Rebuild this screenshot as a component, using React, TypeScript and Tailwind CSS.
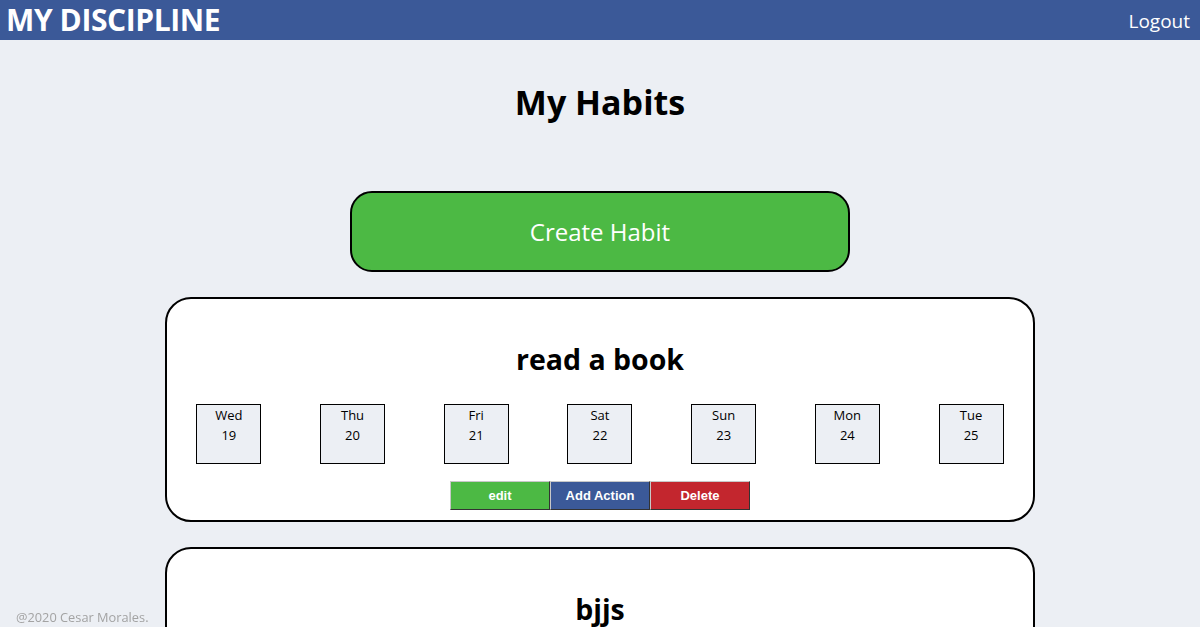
import React from "react";

const days = [
  { name: "Wed", num: 19 },
  { name: "Thu", num: 20 },
  { name: "Fri", num: 21 },
  { name: "Sat", num: 22 },
  { name: "Sun", num: 23 },
  { name: "Mon", num: 24 },
  { name: "Tue", num: 25 },
];

const habits = ["read a book", "bjjs"];

function HabitCard({ title }: { title: string }) {
  return (
    <div className="w-[870px] bg-white border-2 border-black rounded-[26px] pt-[42px] pb-[10px]">
      <h2 className="text-center text-[28.5px] leading-[36px] font-bold text-black">{title}</h2>
      <div className="flex justify-around mt-[27px]">
        {days.map((d) => (
          <div
            key={d.name}
            className="w-[65px] h-[60px] border border-black bg-[#eceff4] flex flex-col items-center text-[13px] leading-[20px] text-black"
          >
            <span>{d.name}</span>
            <span>{d.num}</span>
          </div>
        ))}
      </div>
      <div className="flex justify-center mt-[17px] font-['Liberation_Sans',Arial,sans-serif] text-[13px] font-bold text-white">
        <button className="w-[100px] h-[29px] bg-[#4cb944] border border-t-[#c8c8c8] border-l-[#c8c8c8] border-b-[#333] border-r-[#333]">
          edit
        </button>
        <button className="w-[100px] h-[29px] bg-[#3b5998] border border-t-[#c8c8c8] border-l-[#c8c8c8] border-b-[#333] border-r-[#333]">
          Add Action
        </button>
        <button className="w-[100px] h-[29px] bg-[#c3262e] border border-t-[#c8c8c8] border-l-[#c8c8c8] border-b-[#333] border-r-[#333]">
          Delete
        </button>
      </div>
    </div>
  );
}

export default function App() {
  return (
    <div className="min-h-screen bg-[#eceff4] font-['Open_Sans','Noto_Sans',sans-serif]">
      {/* Header */}
      <header className="h-[40px] bg-[#3b5998] flex items-center justify-between pl-[6px] pr-[10px] text-white">
        <span className="text-[30px] font-bold leading-none tracking-[-0.4px]">MY DISCIPLINE</span>
        <span className="text-[19px] leading-none pt-[3px]">Logout</span>
      </header>

      <main className="flex flex-col items-center">
        <h1 className="mt-[39px] text-[34px] leading-[46px] font-bold text-black">My Habits</h1>

        <button className="mt-[66px] w-[500px] h-[81px] bg-[#4cb944] border-2 border-black rounded-[22px] text-white text-[24px]">
          Create Habit
        </button>

        <div className="mt-[25px] flex flex-col gap-[25px] pb-10">
          {habits.map((h) => (
            <HabitCard key={h} title={h} />
          ))}
        </div>
      </main>

      <footer className="fixed bottom-0 left-[16px] text-[12.8px] text-[#a3a3a3]">
        @2020 Cesar Morales.
      </footer>
    </div>
  );
}
